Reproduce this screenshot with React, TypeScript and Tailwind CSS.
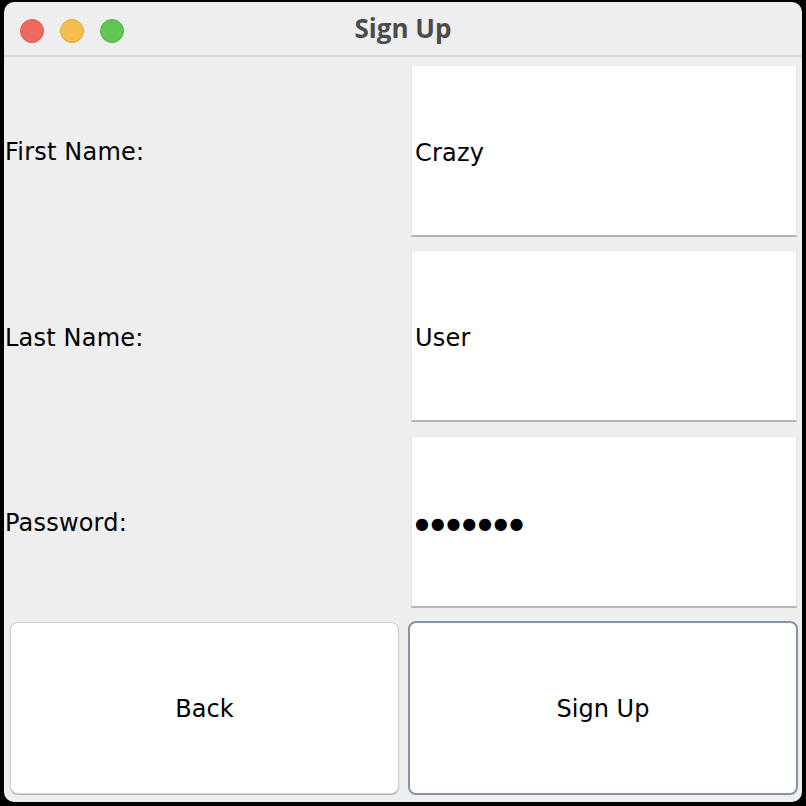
const font = { fontFamily: '"DejaVu Sans", "Liberation Sans", sans-serif' };

function Field({ value, secret }: { value: string; secret?: boolean }) {
  return (
    <div className="flex h-[172px] items-center border-x border-t border-x-[#e2e2e2] border-t-[#e8e8e8] border-b-2 border-b-[#b4b4b4] bg-white pl-[3px] pt-[4px] text-[24px] tracking-[0.2px] text-black">
      {secret ? (
        <span className="text-[16px] tracking-[1.8px]">{'●'.repeat(value.length)}</span>
      ) : (
        value
      )}
    </div>
  );
}

function Label({ text }: { text: string }) {
  return (
    <div className="flex h-full items-center pl-px pt-[5px] text-[24px] tracking-[0.2px] text-black">{text}</div>
  );
}

export default function App() {
  const rows = [
    { label: 'First Name:', value: 'Crazy' },
    { label: 'Last Name:', value: 'User' },
    { label: 'Password:', value: 'secret1', secret: true },
  ];

  return (
    <div className="h-[806px] w-[806px] bg-black pl-1 pr-1 pt-[2px] pb-1" style={font}>
      <div className="flex h-[800px] w-[798px] flex-col overflow-hidden rounded-[10px] bg-[#eeeeee]">
        {/* title bar */}
        <div className="relative flex h-[55px] shrink-0 items-center justify-center border-b-2 border-[#d6d6d6]">
          <div className="absolute left-4 top-[17px] flex gap-4">
            <span className="h-6 w-6 rounded-full border border-[#de5a4f] bg-[#ee6a5f]" />
            <span className="h-6 w-6 rounded-full border border-[#e0a93a] bg-[#f5bf4f]" />
            <span className="h-6 w-6 rounded-full border border-[#52b346] bg-[#61c554]" />
          </div>
          <span
            className="text-[26px] font-bold text-[#4b4b4b]"
            style={{ fontFamily: '"Open Sans", "Liberation Sans", sans-serif' }}
          >
            Sign Up
          </span>
        </div>

        {/* form */}
        <div className="grid flex-1 grid-cols-2 grid-rows-[185px_186px_185px_1fr]">
          {rows.map((r) => (
            <div key={r.label} className="contents">
              <Label text={r.label} />
              <div className="pl-[8px] pr-[5px] pt-[8px]">
                <Field value={r.value} secret={r.secret} />
              </div>
            </div>
          ))}
          <div className="pl-[6px] pr-[4px] pt-[9px] pb-[6px]">
            <button className="flex h-[172px] w-full items-center justify-center rounded-[8px] border border-[#d0d0d0] bg-white pt-[2px] text-[24px] text-black shadow-[0_1px_1px_rgba(0,0,0,0.25)]">
              Back
            </button>
          </div>
          <div className="pl-[5px] pr-[4px] pt-[8px] pb-[5px]">
            <button className="flex h-[174px] w-full items-center justify-center rounded-[8px] border-2 border-[#8593a8] bg-white pt-[2px] text-[24px] text-black">
              Sign Up
            </button>
          </div>
        </div>
      </div>
    </div>
  );
}
